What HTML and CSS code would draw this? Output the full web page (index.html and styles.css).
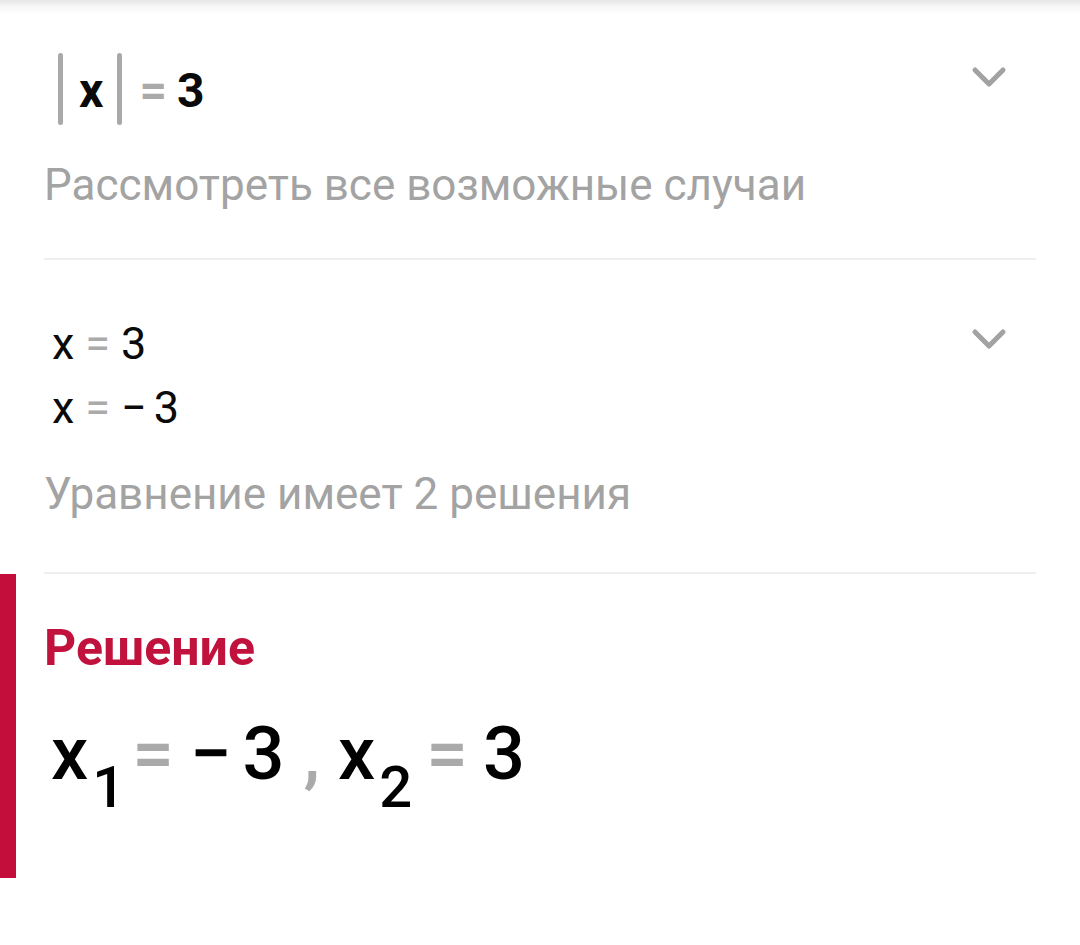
FILE: index.html
```html
<!DOCTYPE html>
<html lang="ru">
<head>
<meta charset="utf-8">
<title>Решение</title>
<link rel="stylesheet" href="styles.css">
</head>
<body>
<div class="topshade"></div>

<section class="step step-first">
  <div class="step-head">
    <div class="expr expr-abs">
      <span class="bar"></span>
      <span class="tok tok-x">x</span>
      <span class="bar"></span>
      <span class="tok eq">=</span>
      <span class="tok">3</span>
    </div>
    <svg class="chevron chevron-1" width="36" height="22" viewBox="0 0 36 22">
      <path d="M4 4 L18 18 L32 4" fill="none" stroke="#a2a2a2" stroke-width="5" stroke-linecap="round" stroke-linejoin="round"/>
    </svg>
  </div>
  <div class="caption caption-1">Рассмотреть все возможные случаи</div>
</section>

<div class="divider"></div>

<section class="step step-second">
  <div class="step-head">
    <div class="cases">
      <div class="case"><span class="tok">x</span><span class="tok eq">=</span><span class="tok">3</span></div>
      <div class="case"><span class="tok">x</span><span class="tok eq">=</span><span class="tok minus">−</span><span class="tok">3</span></div>
    </div>
    <svg class="chevron chevron-2" width="36" height="22" viewBox="0 0 36 22">
      <path d="M4 4 L18 18 L32 4" fill="none" stroke="#a2a2a2" stroke-width="5" stroke-linecap="round" stroke-linejoin="round"/>
    </svg>
  </div>
  <div class="caption caption-2">Уравнение имеет 2 решения</div>
</section>

<div class="divider"></div>

<section class="solution">
  <h2 class="solution-title">Решение</h2>
  <div class="answer"><span class="a-x">x</span><span class="a-sub">1</span><span class="a-eq">=</span><span class="a-minus">−</span><span class="a-num">3</span><span class="a-comma">,</span><span class="a-x a-x2">x</span><span class="a-sub">2</span><span class="a-eq a-eq2">=</span><span class="a-num a-num2">3</span></div>
</section>
</body>
</html>
```

FILE: styles.css
```css
html, body {
  margin: 0;
  padding: 0;
  background: #ffffff;
}

body {
  font-family: Roboto, "Noto Sans", "Liberation Sans", sans-serif;
  color: #0a0a0a;
  width: 1080px;
  height: 945px;
  overflow: hidden;
  position: relative;
}

.topshade {
  position: absolute;
  left: 0;
  top: 0;
  width: 100%;
  height: 14px;
  background: linear-gradient(to bottom, #e6e6e6 0%, #f6f6f6 45%, rgba(255,255,255,0) 100%);
}

.step {
  padding: 0 44px;
}

.step-first {
  padding-top: 53px;
}

.step-second {
  padding-top: 52px;
}

.step-head {
  display: flex;
  justify-content: space-between;
  align-items: flex-start;
}

.expr {
  display: flex;
  align-items: flex-start;
  padding-left: 14px;
}

.expr-abs {
  font-weight: 700;
  font-size: 48px;
  line-height: 72px;
  height: 72px;
}

.bar {
  display: inline-block;
  width: 5px;
  height: 72px;
  border-radius: 3px;
  background: #a9a9a9;
}

.expr-abs .tok-x {
  margin: 2px 14px 0 16px;
}

.expr-abs .eq {
  color: #aaaaaa;
  margin: 2px 10px 0 17px;
}

.expr-abs .tok:last-child {
  margin-top: 2px;
}

.chevron {
  display: block;
  margin-right: 29px;
}

.chevron-1 {
  margin-top: 13px;
}

.chevron-2 {
  margin-top: 16px;
}

.caption {
  font-size: 44px;
  line-height: 52px;
  color: #a3a3a3;
}

.caption-1 {
  margin-top: 34px;
  padding-bottom: 47px;
}

.caption-2 {
  margin-top: 28px;
  padding-bottom: 52px;
}

.cases {
  padding-left: 8px;
  font-size: 45px;
  line-height: 64px;
}

.case {
  display: flex;
  align-items: baseline;
}

.case .tok {
  margin-right: 11px;
}

.case .minus {
  margin-right: 7px;
}

.case .eq {
  color: #aaaaaa;
}

.divider {
  height: 2px;
  margin: 0 44px;
  background: #eeeeee;
}

.solution {
  border-left: 16px solid #c30d3a;
  padding: 46px 0 79px 28px;
}

.solution-title {
  margin: 0;
  font-size: 50px;
  line-height: 56px;
  font-weight: 700;
  color: #c0123c;
}

.answer {
  margin-top: 33px;
  padding-left: 7px;
  font-size: 74px;
  font-weight: 500;
  color: #000000;
  line-height: 90px;
  height: 90px;
  white-space: nowrap;
}

.answer span {
  display: inline-block;
}

.a-sub {
  font-size: 58px;
  line-height: 58px;
  vertical-align: -28px;
  margin-left: 4px;
}

.a-eq {
  color: #aaaaaa;
  margin-left: 7px;
}

.a-minus {
  margin-left: 16px;
}

.a-num {
  margin-left: 11px;
}

.a-comma {
  color: #aaaaaa;
  margin-left: 19px;
}

.a-x2 {
  margin-left: 18px;
}

.a-eq2 {
  margin-left: 14px;
}

.a-num2 {
  margin-left: 15px;
}
```
